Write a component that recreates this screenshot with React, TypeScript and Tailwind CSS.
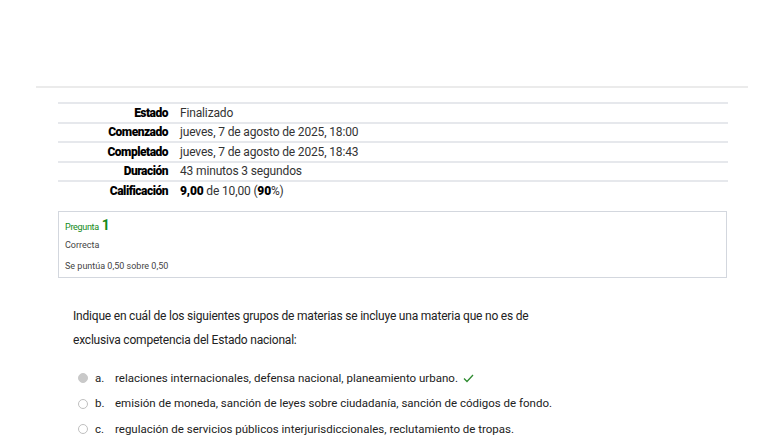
import React from 'react';

const summary: { label: string; value: React.ReactNode }[] = [
  { label: 'Estado', value: 'Finalizado' },
  { label: 'Comenzado', value: 'jueves, 7 de agosto de 2025, 18:00' },
  { label: 'Completado', value: 'jueves, 7 de agosto de 2025, 18:43' },
  { label: 'Duración', value: '43 minutos 3 segundos' },
  {
    label: 'Calificación',
    value: (
      <>
        <b className="font-black text-black">9,00</b> de 10,00 (<b className="font-black text-black">90</b>%)
      </>
    ),
  },
];

const options = [
  { letter: 'a.', text: 'relaciones internacionales, defensa nacional, planeamiento urbano.', checked: true },
  { letter: 'b.', text: 'emisión de moneda, sanción de leyes sobre ciudadanía, sanción de códigos de fondo.', checked: false },
  { letter: 'c.', text: 'regulación de servicios públicos interjurisdiccionales, reclutamiento de tropas.', checked: false },
];

export default function App() {
  return (
    <div className="min-h-[441px] w-[784px] bg-white font-['Roboto',sans-serif] text-[#333]">
      <div className="h-[86px]" />
      <div className="mx-[36px] h-[2px] bg-[#ebebeb]" />
      <div className="ml-[58px] mr-[56px] mt-[14px]">
        <div className="flex flex-col text-[12px]">
          {summary.map(row => (
            <div key={row.label} className="flex h-[19.5px] items-center border-t-2 border-[#e6e8ec]">
              <div className="w-[110px] shrink-0 text-right font-black tracking-[-0.5px] text-black">{row.label}</div>
              <div className="ml-[12px] tracking-[-0.15px] text-[#333]">{row.value}</div>
            </div>
          ))}
        </div>

        <div className="mt-[11px] mr-[1px] h-[67px] border border-[#d3d7de] px-[6px] pt-[6px]">
          <div className="flex items-baseline gap-[3px] text-[#138a1a]">
            <span className="text-[9px] tracking-[-0.3px]">Pregunta</span>
            <span className="text-[14px] font-bold leading-[14px]">1</span>
          </div>
          <div className="mt-[5px] text-[9px] leading-[12px] text-[#444]">Correcta</div>
          <div className="mt-[9px] text-[9px] leading-[12px] text-[#444]">Se puntúa 0,50 sobre 0,50</div>
        </div>
      </div>

      <div className="ml-[73px] mt-[26px] text-[12px] leading-[24px] tracking-[-0.2px] text-[#222]">
        <p>Indique en cuál de los siguientes grupos de materias se incluye una materia que no es de</p>
        <p>exclusiva competencia del Estado nacional:</p>
      </div>

      <div className="ml-[78px] mt-[14px] flex flex-col text-[11.5px] text-[#222]">
        {options.map(o => (
          <div key={o.letter} className="flex h-[25.5px] items-center">
            <span
              className={
                o.checked
                  ? 'h-[10px] w-[10px] rounded-full border border-[#c9c9c9] bg-[#c9c9c9]'
                  : 'h-[10px] w-[10px] rounded-full border border-[#bfbfbf] bg-white'
              }
            />
            <span className="ml-[7px] w-[20px]">{o.letter}</span>
            <span>{o.text}</span>
            {o.checked && (
              <svg className="ml-[5px]" width="11" height="9" viewBox="0 0 11 9" fill="none">
                <path d="M1 4.5 L4 7.5 L10 1" stroke="#2e8b30" strokeWidth="1.3" />
              </svg>
            )}
          </div>
        ))}
      </div>
    </div>
  );
}
